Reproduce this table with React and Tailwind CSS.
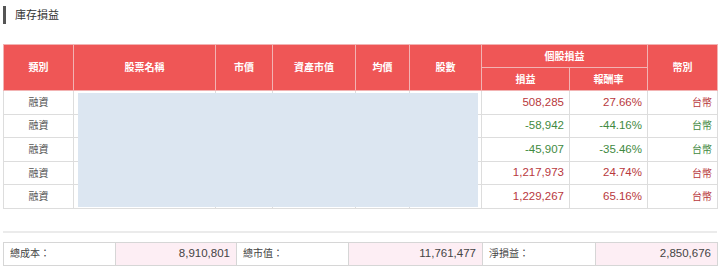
import React from "react";

const rows = [
  { pl: "508,285", rate: "27.66%", up: true },
  { pl: "-58,942", rate: "-44.16%", up: false },
  { pl: "-45,907", rate: "-35.46%", up: false },
  { pl: "1,217,973", rate: "24.74%", up: true },
  { pl: "1,229,267", rate: "65.16%", up: true },
];

const th = "bg-[#ef5656] text-white font-bold text-[10px] border border-[#f2b3b3] p-0 text-center";
const td = "border border-[#dddddd] p-0 h-[23.6px]";

export default function App() {
  return (
    <div
      className="relative w-[720px] h-[268px] bg-white overflow-hidden"
      style={{ fontFamily: '"Liberation Sans", "Noto Sans CJK TC", sans-serif' }}
    >
      {/* title */}
      <div className="flex items-center pt-[6px] pl-[3px] h-[24px]">
        <div className="w-[3px] h-[18px] bg-[#555555]" />
        <span className="ml-[9px] text-[11px] text-[#333333]">庫存損益</span>
      </div>

      {/* holdings table */}
      <table className="mt-[20px] ml-[3px] w-[714px] border-collapse table-fixed">
        <colgroup>
          <col className="w-[70px]" />
          <col className="w-[142px]" />
          <col className="w-[57px]" />
          <col className="w-[83px]" />
          <col className="w-[54px]" />
          <col className="w-[72px]" />
          <col className="w-[88px]" />
          <col className="w-[78px]" />
          <col className="w-[70px]" />
        </colgroup>
        <thead>
          <tr className="h-[23px]">
            <th rowSpan={2} className={th}>類別</th>
            <th rowSpan={2} className={th}>股票名稱</th>
            <th rowSpan={2} className={th}>市價</th>
            <th rowSpan={2} className={th}>資產市值</th>
            <th rowSpan={2} className={th}>均價</th>
            <th rowSpan={2} className={th}>股數</th>
            <th colSpan={2} className={th}>個股損益</th>
            <th rowSpan={2} className={th}>幣別</th>
          </tr>
          <tr className="h-[23px]">
            <th className={th}>損益</th>
            <th className={th}>報酬率</th>
          </tr>
        </thead>
        <tbody>
          {rows.map((r, i) => {
            const color = r.up ? "text-[#b8383d]" : "text-[#3f8a3f]";
            return (
              <tr key={i}>
                <td className={`${td} text-center text-[10px] text-[#555555]`}>融資</td>
                <td className={td} />
                <td className={td} />
                <td className={td} />
                <td className={td} />
                <td className={td} />
                <td className={`${td} text-right pr-[5px] text-[11.5px] ${color}`}>{r.pl}</td>
                <td className={`${td} text-right pr-[5px] text-[11.5px] ${color}`}>{r.rate}</td>
                <td className={`${td} text-right pr-[5px] text-[10px] ${color}`}>台幣</td>
              </tr>
            );
          })}
        </tbody>
      </table>

      {/* masked stock info */}
      <div className="absolute left-[78px] top-[93px] w-[400px] h-[114px] bg-[#dce6f1]" />

      <div className="mt-[22px] ml-[3px] w-[714px] border-t-2 border-[#ebebeb]" />

      {/* summary */}
      <table className="mt-[9px] ml-[3px] w-[714px] border-collapse table-fixed text-[10px] text-[#444444]">
        <colgroup>
          <col className="w-[112px]" />
          <col className="w-[121px]" />
          <col className="w-[112px]" />
          <col className="w-[134px]" />
          <col className="w-[113px]" />
          <col className="w-[122px]" />
        </colgroup>
        <tbody>
          <tr className="h-[23px]">
            <td className="border border-[#d6d6d6] pl-[6px]">總成本：</td>
            <td className="border border-[#d6d6d6] bg-[#fdeef4] text-right pr-[6px] text-[11.5px]">8,910,801</td>
            <td className="border border-[#d6d6d6] pl-[6px]">總市值：</td>
            <td className="border border-[#d6d6d6] bg-[#fdeef4] text-right pr-[6px] text-[11.5px]">11,761,477</td>
            <td className="border border-[#d6d6d6] pl-[6px]">淨損益：</td>
            <td className="border border-[#d6d6d6] bg-[#fdeef4] text-right pr-[6px] text-[11.5px]">2,850,676</td>
          </tr>
        </tbody>
      </table>
    </div>
  );
}
